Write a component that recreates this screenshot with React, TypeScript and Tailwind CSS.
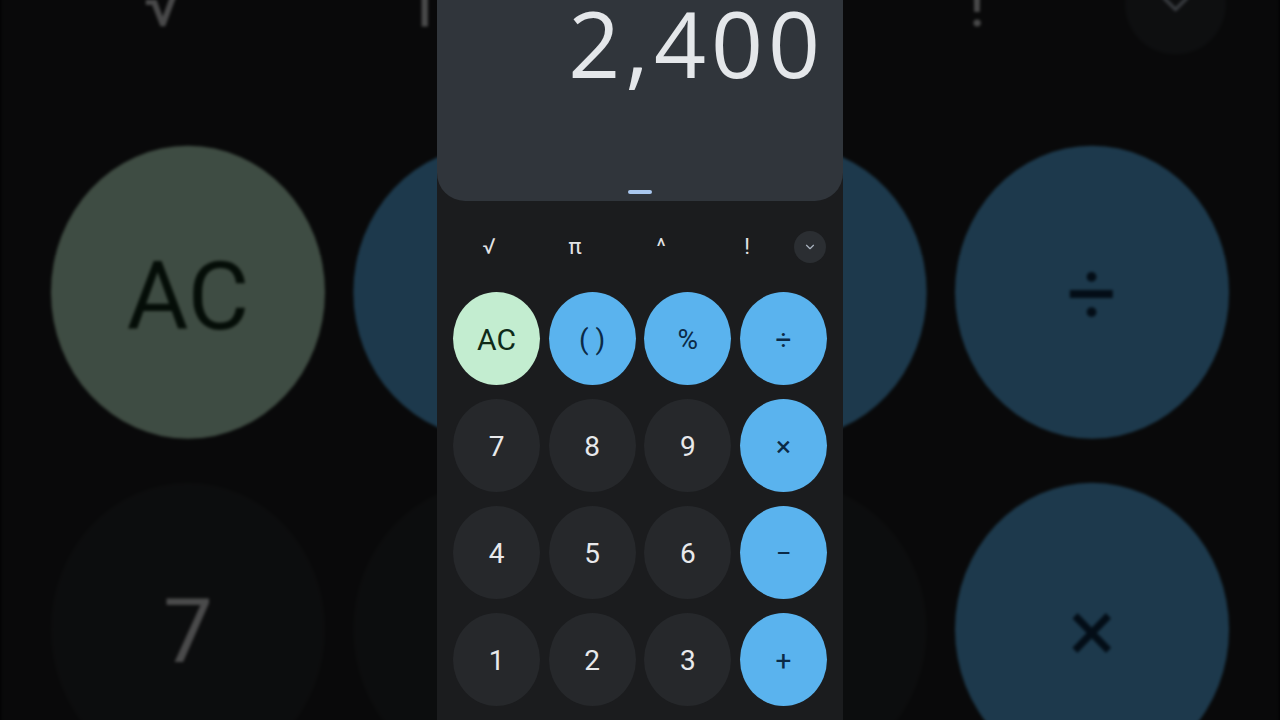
import { ChevronDown } from "lucide-react";

type Key = { label: string; kind: "clear" | "op" | "num" };

const keys: Key[] = [
  { label: "AC", kind: "clear" },
  { label: "( )", kind: "op" },
  { label: "%", kind: "op" },
  { label: "÷", kind: "op" },
  { label: "7", kind: "num" },
  { label: "8", kind: "num" },
  { label: "9", kind: "num" },
  { label: "×", kind: "op" },
  { label: "4", kind: "num" },
  { label: "5", kind: "num" },
  { label: "6", kind: "num" },
  { label: "−", kind: "op" },
  { label: "1", kind: "num" },
  { label: "2", kind: "num" },
  { label: "3", kind: "num" },
  { label: "+", kind: "op" },
];

const keyStyle = {
  clear: "bg-[#c3edd0] text-[#0f2a18] text-[30px]",
  op: "bg-[#5ab3ee] text-[#0b2a47] text-[28px]",
  num: "bg-[#26282b] text-[#e8e9eb] text-[28px]",
};

function Calculator() {
  return (
    <div className="w-[406px] h-[720px] bg-[#1b1c1e] overflow-hidden font-['Roboto',sans-serif]">
      {/* 결과 표시 영역 */}
      <div className="h-[201px] bg-[#30353b] rounded-b-[28px] flex flex-col justify-between items-end pr-[18px] pb-[7px]">
        <p className="mt-[-2px] font-['Open_Sans',sans-serif] text-[91px] leading-none font-normal text-[#e4e7ea] tracking-[5px]">
          2,400
        </p>
        <div className="self-center w-[24px] h-[4px] rounded-full bg-[#a9c7ee] translate-x-[9px]" />
      </div>

      {/* 공학 기능 줄 */}
      <div className="h-[91px] flex items-center pl-[9px] text-[22px] text-[#e2e3e5]">
        {["√", "π", "^", "!"].map((s) => (
          <span key={s} className="w-[86px] text-center">
            {s}
          </span>
        ))}
        <span className="ml-[4px] w-[32px] h-[32px] rounded-full bg-[#2b2e32] flex items-center justify-center">
          <ChevronDown className="w-[14px] h-[14px] text-[#aab4c0]" strokeWidth={2} />
        </span>
      </div>

      {/* 버튼 */}
      <div className="grid grid-cols-4 gap-x-[8.67px] gap-y-[14px] px-4">
        {keys.map((k) => (
          <div
            key={k.label}
            className={`h-[93px] pt-[2px] rounded-[50%] flex items-center justify-center ${keyStyle[k.kind]}`}
          >
            {k.label}
          </div>
        ))}
      </div>
    </div>
  );
}

export default function App() {
  return (
    <div className="relative w-full h-[720px] bg-black overflow-hidden">
      {/* 배경: 확대되고 어둡게 처리된 화면 */}
      <div className="absolute inset-0 brightness-[0.32] blur-[1.5px]">
        <div className="w-full h-full flex justify-center">
          <div className="scale-[3.15]">
            <Calculator />
          </div>
        </div>
      </div>
      <div className="relative flex justify-center">
        <Calculator />
      </div>
    </div>
  );
}
